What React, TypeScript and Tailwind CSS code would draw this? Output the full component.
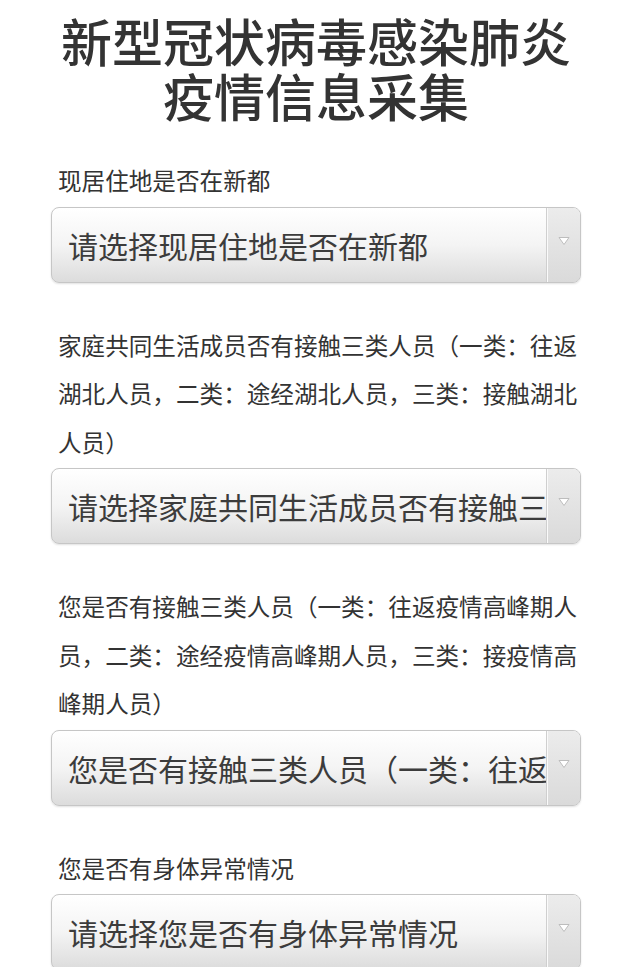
const FONT = "font-['Noto_Sans_CJK_SC','Noto_Sans',sans-serif]";

interface Field {
  label: string;
  placeholder: string;
}

const FIELDS: Field[] = [
  { label: '现居住地是否在新都', placeholder: '请选择现居住地是否在新都' },
  {
    label: '家庭共同生活成员否有接触三类人员（一类：往返湖北人员，二类：途经湖北人员，三类：接触湖北人员）',
    placeholder: '请选择家庭共同生活成员否有接触三类人员',
  },
  {
    label: '您是否有接触三类人员（一类：往返疫情高峰期人员，二类：途经疫情高峰期人员，三类：接疫情高峰期人员）',
    placeholder: '您是否有接触三类人员（一类：往返疫情高峰期人员）',
  },
  { label: '您是否有身体异常情况', placeholder: '请选择您是否有身体异常情况' },
];

function SelectBox({ text }: { text: string }) {
  return (
    <div className="flex h-[76px] overflow-hidden rounded-[8px] border border-[#c6c6c6] bg-gradient-to-b from-white via-[#f4f4f4] to-[#dcdcdc] shadow-[0_1px_2px_rgba(0,0,0,0.12)]">
      <div className="flex min-w-0 flex-1 items-center overflow-hidden pl-[16px] pr-[10px]">
        <span className="whitespace-nowrap text-[30px] leading-none text-[#3c3c3c]">{text}</span>
      </div>
      <div className="flex w-[34px] shrink-0 items-center justify-center border-l border-[#cfcfcf] bg-gradient-to-b from-[#ececec] to-[#dadada] shadow-[inset_1px_0_0_#fafafa]">
        <svg width="12" height="10" viewBox="0 0 12 10" className="-mt-[8px]">
          <path d="M1 1.5 L11 1.5 L6 8.5 Z" fill="#fff" stroke="#bdbdbd" strokeWidth="1" />
        </svg>
      </div>
    </div>
  );
}

export default function App() {
  return (
    <div className={`${FONT} min-h-screen bg-white px-[51px] text-[#333]`}>
      <h1 className="pt-[13px] text-center text-[51px] font-medium leading-[55px] text-[#333]">
        新型冠状病毒感染肺炎
        <br />
        疫情信息采集
      </h1>

      <div className="mt-[33px] flex flex-col gap-[38px]">
        {FIELDS.map((f) => (
          <div key={f.label} className="flex flex-col">
            <p className="mb-[2px] pl-[7px] text-[23.6px] leading-[48.5px] text-[#333]">{f.label}</p>
            <SelectBox text={f.placeholder} />
          </div>
        ))}
      </div>
    </div>
  );
}
